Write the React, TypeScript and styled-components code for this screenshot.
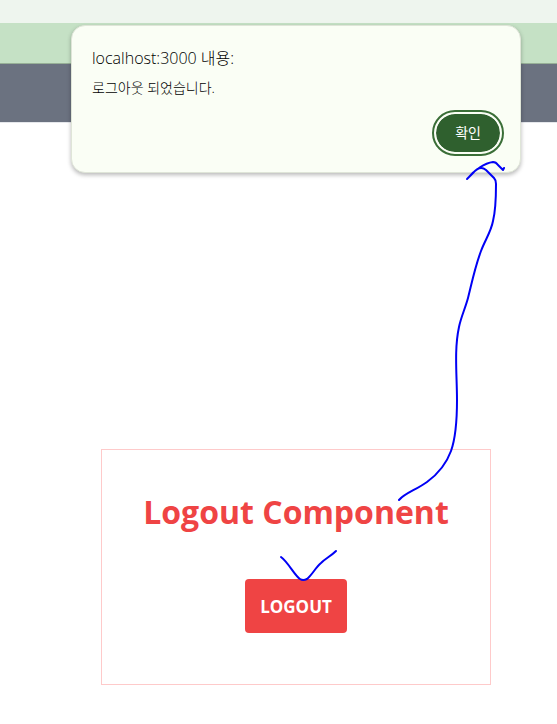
import React from "react";
import styled, { createGlobalStyle } from "styled-components";

const GlobalStyle = createGlobalStyle`
  *, *::before, *::after { box-sizing: border-box; }
  body {
    margin: 0;
    background: #fff;
    font-family: "Open Sans", "Noto Sans CJK KR", sans-serif;
  }
`;

const Page = styled.div`
  position: relative;
  min-height: 100vh;
`;

const TabStrip = styled.div`
  height: 23px;
  background: #eef5ee;
`;

const Toolbar = styled.div`
  height: 41px;
  background: #c5e1c5;
  border-bottom: 1px solid #97b097;
`;

const SiteHeader = styled.header`
  height: 59px;
  background: #6b7280;
  border-bottom: 1px solid #e5e7eb;
`;

const Main = styled.main`
  padding: 326px 66px 39px 101px;
`;

const Panel = styled.section`
  display: flex;
  flex-direction: column;
  align-items: center;
  gap: 43px;
  padding: 38px 16px 51px;
  border: 1px solid #fecaca;
`;

const Heading = styled.h1`
  margin: 0;
  color: #ef4444;
  font-size: 32px;
  font-weight: 700;
  line-height: 48px;
  white-space: nowrap;
`;

const LogoutButton = styled.button`
  padding: 16px 15px 14px;
  border: 0;
  border-radius: 4px;
  background: #ef4444;
  color: #fff;
  font: inherit;
  font-size: 17px;
  font-weight: 700;
  line-height: 24px;
`;

const AlertLayer = styled.div`
  position: absolute;
  top: 25px;
  left: 71px;
  right: 36px;
`;

const Alert = styled.div`
  display: flex;
  flex-direction: column;
  padding: 20px 16px 16px 20px;
  border: 1px solid #dfe5d8;
  border-radius: 14px;
  background: #fafef5;
  box-shadow: 0 2px 4px rgba(0, 0, 0, 0.28);
  color: #000;
`;

const AlertTitle = styled.h2`
  margin: 0;
  font-size: 16px;
  font-weight: 300;
  line-height: 24px;
`;

const AlertMessage = styled.p`
  margin: 6px 0 10px;
  font-size: 14px;
  font-weight: 300;
  line-height: 24px;
`;

const ConfirmButton = styled.button`
  align-self: flex-end;
  margin: 2px;
  padding: 10px 19px;
  border: 2px solid #fafef5;
  border-radius: 24px;
  outline: 2px solid #3a6e37;
  background: #2f602e;
  background-clip: padding-box;
  color: #fff;
  font: inherit;
  font-size: 14px;
  line-height: 18px;
`;

const Annotations = styled.svg`
  position: absolute;
  top: 0;
  left: 0;
  pointer-events: none;
  fill: none;
  stroke: #0000f5;
  stroke-width: 2;
  stroke-linecap: round;
  stroke-linejoin: round;
`;

export default function App() {
  return (
    <Page>
      <GlobalStyle />
      <TabStrip />
      <Toolbar />
      <SiteHeader />
      <Main>
        <Panel>
          <Heading>Logout Component</Heading>
          <LogoutButton type="button">LOGOUT</LogoutButton>
        </Panel>
      </Main>
      <AlertLayer>
        <Alert role="alertdialog" aria-labelledby="alert-title" aria-describedby="alert-message">
          <AlertTitle id="alert-title">localhost:3000 내용:</AlertTitle>
          <AlertMessage id="alert-message">로그아웃 되었습니다.</AlertMessage>
          <ConfirmButton type="button">확인</ConfirmButton>
        </Alert>
      </AlertLayer>
      <Annotations width="557" height="724" viewBox="0 0 557 724" aria-hidden="true">
        <path d="M281 557C288 562 295 576 300 579Q303 581 307 579C312 575 316 567 321 563C326 558 331 556 336 551" />
        <path d="M399 500C405 493 416 490 427 482C438 474 447 462 451 451C456 437 457 415 457 400C457 375 454 350 459 327C461 317 465 309 468 298C472 282 475 267 481 251C485 240 491 232 493 221C496 209 496 193 496 184Q496 180 494 178L486 170Q480 165 473 173L467 179C474 170 485 163 493 162Q496 162 498 165L503 170L504 168" />
      </Annotations>
    </Page>
  );
}
